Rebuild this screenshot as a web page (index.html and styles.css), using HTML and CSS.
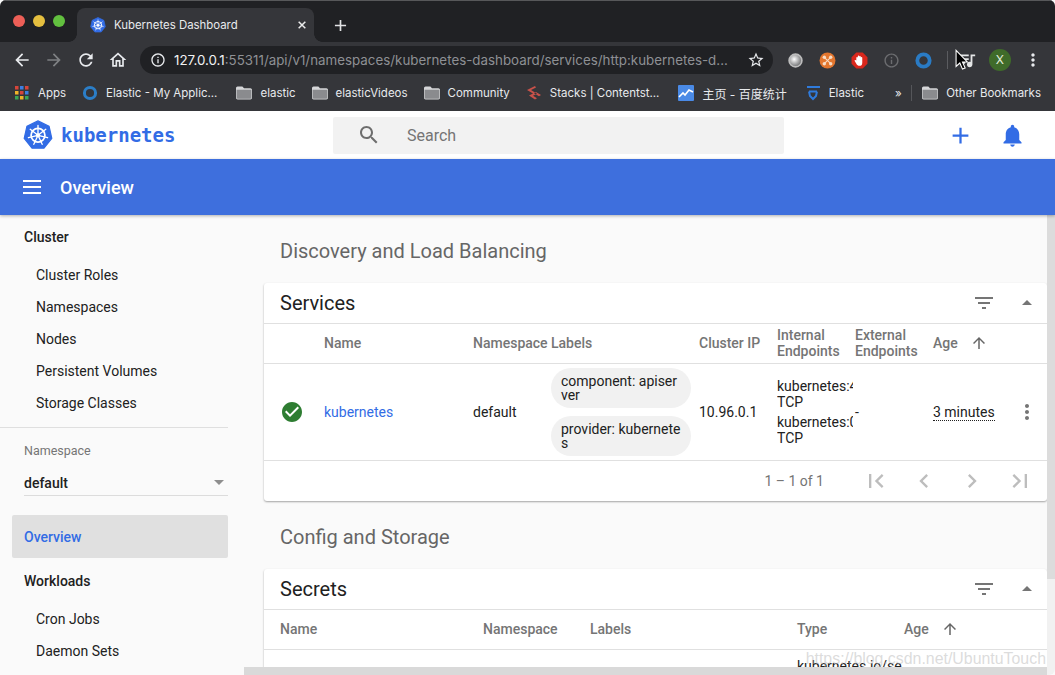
FILE: index.html
```html
<!DOCTYPE html>
<html lang="en">
<head>
<meta charset="utf-8">
<title>Kubernetes Dashboard</title>
<link rel="stylesheet" href="styles.css">
</head>
<body>
<svg class="defs" width="0" height="0" aria-hidden="true">
  <symbol id="kube" viewBox="0 0 100 100">
    <path d="M50 3 87 21 96 61 70 94H30L4 61 13 21Z" fill="#326ce5" stroke="#326ce5" stroke-width="4" stroke-linejoin="round"/>
    <g fill="none" stroke="#fff">
      <circle cx="50" cy="51" r="23" stroke-width="6"/>
      <path stroke-width="4.5" stroke-linecap="round" d="M50 51V18M50 51 76 31M50 51 82 59M50 51 64 81M50 51 36 81M50 51 18 59M50 51 24 31"/>
    </g>
    <circle cx="50" cy="51" r="7" fill="#fff"/>
  </symbol>
  <symbol id="folder" viewBox="2 3 20 18">
    <path fill="#8a8b8e" d="M3 7h18v12H3z"/>
    <path fill="#d5d6d8" d="M20 6h-8l-2-2H4c-1.100 0-2 .9-2 2v12c0 1.100.9 2 2 2h16c1.100 0 2-.9 2-2V8c0-1.100-.9-2-2-2zm1 12c0 .6-.4 1-1 1H4c-.6 0-1-.4-1-1V8h18v10z"/>
  </symbol>
  <symbol id="filter" viewBox="0 0 24 24"><path d="M10 18h4v-2h-4v2zM3 6v2h18V6H3zm3 7h12v-2H6v2z"/></symbol>
  <symbol id="dropup" viewBox="0 0 24 24"><path d="M7 14l5-5 5 5z"/></symbol>
  <symbol id="sort" viewBox="0 0 24 24"><path d="M4 12l1.410 1.410L11 7.830V20h2V7.830l5.580 5.590L20 12l-8-8-8 8z"/></symbol>
  <symbol id="vert" viewBox="0 0 24 24"><path d="M12 8c1.100 0 2-.9 2-2s-.9-2-2-2-2 .9-2 2 .9 2 2 2zm0 2c-1.100 0-2 .9-2 2s.9 2 2 2 2-.9 2-2-.9-2-2-2zm0 6c-1.100 0-2 .9-2 2s.9 2 2 2 2-.9 2-2-.9-2-2-2z"/></symbol>
</svg>

<div class="window">
  <div class="tabstrip">
    <div class="lights"><span class="light red"></span><span class="light yellow"></span><span class="light green"></span></div>
    <div class="tab">
      <svg class="tab-icon"><use href="#kube"/></svg>
      <span class="tab-title">Kubernetes Dashboard</span>
      <svg class="tab-close" viewBox="0 0 12 12"><path d="M2 2 10 10M10 2 2 10"/></svg>
    </div>
    <svg class="tab-new" viewBox="0 0 14 14"><path d="M7 1V13M1 7H13"/></svg>
  </div>

  <div class="toolbar">
    <span class="tool"><svg viewBox="0 0 24 24"><path d="M20 11H7.830l5.590-5.590L12 4l-8 8 8 8 1.410-1.410L7.830 13H20v-2z"/></svg></span>
    <span class="tool dim"><svg viewBox="0 0 24 24"><path d="M12 4l-1.410 1.410L16.170 11H4v2h12.170l-5.580 5.590L12 20l8-8z"/></svg></span>
    <span class="tool"><svg viewBox="0 0 24 24"><path d="M17.650 6.350C16.200 4.900 14.210 4 12 4c-4.420 0-7.990 3.580-7.990 8s3.570 8 7.990 8c3.730 0 6.840-2.550 7.730-6h-2.080c-.82 2.330-3.040 4-5.650 4-3.310 0-6-2.690-6-6s2.690-6 6-6c1.660 0 3.140.69 4.220 1.780L13 11h7V4l-2.350 2.350z"/></svg></span>
    <span class="tool"><svg viewBox="0 0 24 24"><path d="M12 5.690l5 4.500V18h-2v-6H9v6H7v-7.810l5-4.500M12 3L2 12h3v8h6v-6h2v6h6v-8h3L12 3z"/></svg></span>
    <div class="omnibox">
      <svg class="omni-info" viewBox="0 0 24 24"><path d="M11 7h2v2h-2zm0 4h2v6h-2zm1-9C6.480 2 2 6.480 2 12s4.480 10 10 10 10-4.480 10-10S17.520 2 12 2zm0 18c-4.410 0-8-3.590-8-8s3.590-8 8-8 8 3.590 8 8-3.590 8-8 8z"/></svg>
      <span class="url"><b>127.0.0.1</b>:55311/api/v1/namespaces/kubernetes-dashboard/services/http:kubernetes-d...</span>
      <svg class="omni-star" viewBox="0 0 24 24"><path d="M22 9.240l-7.190-.62L12 2 9.190 8.630 2 9.240l5.460 4.730L5.820 21 12 17.270 18.180 21l-1.630-7.030L22 9.240zM12 15.400l-3.760 2.270 1-4.280-3.320-2.880 4.380-.38L12 6.100l1.710 4.040 4.380.38-3.320 2.880 1 4.280L12 15.400z"/></svg>
    </div>
    <div class="exts">
      <span class="ext"><svg viewBox="0 0 16 16"><defs><radialGradient id="ball" cx=".4" cy=".4" r=".6"><stop offset="0" stop-color="#fff"/><stop offset="1" stop-color="#6d6e70"/></radialGradient></defs><circle cx="8" cy="8" r="6" fill="url(#ball)" stroke="#bdbdbd" stroke-width="1.600"/></svg></span>
      <span class="ext"><svg viewBox="0 0 16 16"><circle cx="8" cy="8" r="7.500" fill="#e3762e"/><g fill="#f8dcc4"><circle cx="5" cy="5" r="1.600"/><circle cx="11" cy="5" r="1.600"/><circle cx="5" cy="11" r="1.600"/><circle cx="11" cy="11" r="1.600"/></g><path d="M5 5 11 11M11 5 5 11" stroke="#f8dcc4"/></svg></span>
      <span class="ext"><svg viewBox="0 0 16 16"><path d="M5 .5h6L15.500 5v6L11 15.500H5L.5 11V5Z" fill="#d9271c"/><path d="M5 8V5.500a.7.700 0 0 1 1.400 0V4a.7.700 0 0 1 1.400 0v.5a.7.700 0 0 1 1.400 0v1a.7.700 0 0 1 1.400 0V10c0 2-1 3-2.600 3-1.500 0-2.200-.7-3-2L3.500 8.500c-.4-.7.5-1.300 1-.7Z" fill="#fff"/></svg></span>
      <span class="ext"><svg viewBox="0 0 24 24"><path fill="#6c6d70" d="M11 7h2v2h-2zm0 4h2v6h-2zm1-9C6.480 2 2 6.480 2 12s4.480 10 10 10 10-4.480 10-10S17.520 2 12 2zm0 18c-4.410 0-8-3.590-8-8s3.590-8 8-8 8 3.590 8 8-3.590 8-8 8z"/></svg></span>
      <span class="ext"><svg viewBox="0 0 16 16"><circle cx="8" cy="8" r="5.800" fill="none" stroke="#2a7bc4" stroke-width="3.600"/></svg></span>
      <span class="ext-sep"></span>
      <span class="ext queue"><svg viewBox="0 0 24 24"><path fill="#e4e5e6" d="M15 6H3v2h12V6zm0 4H3v2h12v-2zM3 16h8v-2H3v2zM17 6v8.180c-.310-.110-.650-.180-1-.180-1.660 0-3 1.340-3 3s1.340 3 3 3 3-1.340 3-3V8h3V6h-5z"/></svg>
        <svg class="cursor" viewBox="0 0 14 20"><path d="M1 1V16L4.500 12.800 7 18.500 9.500 17.400 7 11.800H11.500Z" fill="#000" stroke="#fff" stroke-width="1"/></svg>
      </span>
      <span class="avatar">X</span>
      <span class="ext kebab"><svg viewBox="0 0 24 24"><use href="#vert"/></svg></span>
    </div>
  </div>

  <div class="bookmarks">
    <span class="bm"><svg class="bm-icon" viewBox="-1 -1 16 16"><g><rect x="0" y="0" width="3.500" height="3.500" fill="#d6453a"/><rect x="5" y="0" width="3.500" height="3.500" fill="#3d7fe0"/><rect x="10" y="0" width="3.500" height="3.500" fill="#d6453a"/><rect x="0" y="5" width="3.500" height="3.500" fill="#f0b429"/><rect x="5" y="5" width="3.500" height="3.500" fill="#d6453a"/><rect x="10" y="5" width="3.500" height="3.500" fill="#3d7fe0"/><rect x="0" y="10" width="3.500" height="3.500" fill="#3aa655"/><rect x="5" y="10" width="3.500" height="3.500" fill="#f0b429"/><rect x="10" y="10" width="3.500" height="3.500" fill="#3aa655"/></g></svg>Apps</span>
    <span class="bm bm-pad"><svg class="bm-icon" viewBox="0 0 16 16"><circle cx="8" cy="8" r="5.600" fill="none" stroke="#2b7ec7" stroke-width="3"/></svg>Elastic - My Applic...</span>
    <span class="bm"><svg class="bm-icon"><use href="#folder"/></svg>elastic</span>
    <span class="bm"><svg class="bm-icon"><use href="#folder"/></svg>elasticVideos</span>
    <span class="bm"><svg class="bm-icon"><use href="#folder"/></svg>Community</span>
    <span class="bm bm-pad"><svg class="bm-icon" viewBox="0 0 16 16"><path d="M9 1 1 5l6 3.500-4 2 6 4 2-1.200-4-2.600 4-2L5 5l5-2.500Z M10 7l5 3-2 1.200-5-3Z" fill="#c9524a"/></svg>Stacks | Contentst...</span>
    <span class="bm bm-pad-s"><svg class="bm-icon" viewBox="0 0 16 16"><rect width="16" height="16" rx="1" fill="#4a8ae6"/><path d="M1 12 5 8l2 2 4-5 4 2" fill="none" stroke="#fff" stroke-width="1.600"/></svg><span class="cjk">主页 - 百度统计</span></span>
    <span class="bm"><svg class="bm-icon" viewBox="0 0 16 16"><path d="M2 2H15M4 6.500H12M4 6.500 5 11 8 14 11 11 12 6.500" fill="none" stroke="#2f7bdc" stroke-width="2"/></svg>Elastic</span>
    <span class="bm-more">»</span>
    <span class="bm-sep"></span>
    <span class="bm"><svg class="bm-icon"><use href="#folder"/></svg>Other Bookmarks</span>
  </div>

  <header class="app-header">
    <div class="brand"><svg class="brand-icon"><use href="#kube"/></svg><span class="brand-name">kubernetes</span></div>
    <div class="search">
      <svg class="search-icon" viewBox="0 0 24 24"><path d="M15.500 14h-.79l-.28-.27C15.410 12.590 16 11.110 16 9.500 16 5.910 13.090 3 9.500 3S3 5.910 3 9.500 5.910 16 9.500 16c1.610 0 3.090-.59 4.230-1.570l.27.28v.79l5 4.990L20.490 19l-4.990-5zm-6 0C7.010 14 5 11.990 5 9.500S7.010 5 9.500 5 14 7.010 14 9.500 11.990 14 9.500 14z"/></svg>
      <span class="search-text">Search</span>
    </div>
    <div class="header-actions">
      <svg viewBox="0 0 24 24"><path d="M19 13h-6v6h-2v-6H5v-2h6V5h2v6h6v2z"/></svg>
      <svg viewBox="0 0 24 24"><path d="M12 22c1.100 0 2-.9 2-2h-4c0 1.100.89 2 2 2zm6-6v-5c0-3.070-1.640-5.640-4.500-6.320V4c0-.83-.67-1.500-1.500-1.500s-1.500.67-1.500 1.500v.68C7.630 5.360 6 7.920 6 11v5l-2 2v1h16v-1l-2-2z"/></svg>
    </div>
  </header>

  <div class="app-bar">
    <svg class="menu-icon" viewBox="0 0 18 14"><path d="M0 1H18M0 7H18M0 13H18"/></svg>
    <span class="app-bar-title">Overview</span>
  </div>

  <div class="main">
    <nav class="sidebar">
      <div class="nav-group">Cluster</div>
      <a class="nav-item">Cluster Roles</a>
      <a class="nav-item">Namespaces</a>
      <a class="nav-item">Nodes</a>
      <a class="nav-item">Persistent Volumes</a>
      <a class="nav-item">Storage Classes</a>
      <div class="nav-divider"></div>
      <div class="ns-label">Namespace</div>
      <div class="ns-select"><span>default</span><i class="ns-caret"></i></div>
      <a class="nav-active">Overview</a>
      <div class="nav-group nav-group-2">Workloads</div>
      <a class="nav-item">Cron Jobs</a>
      <a class="nav-item">Daemon Sets</a>
    </nav>

    <section class="content">
      <h2 class="section-title">Discovery and Load Balancing</h2>
      <div class="card">
        <div class="card-head">
          <span class="card-title">Services</span>
          <svg class="ico ico-filter"><use href="#filter"/></svg>
          <svg class="ico ico-up"><use href="#dropup"/></svg>
        </div>
        <table class="data services">
          <colgroup><col class="c60"><col class="c149"><col class="c78"><col class="c148"><col class="c78"><col class="c78"><col class="c78"><col class="c84"><col class="c30"></colgroup>
          <thead><tr>
            <th></th><th>Name</th><th>Namespace</th><th>Labels</th><th>Cluster IP</th><th>Internal<br>Endpoints</th><th>External<br>Endpoints</th>
            <th><span class="age-head">Age<svg class="ico-sort"><use href="#sort"/></svg></span></th><th></th>
          </tr></thead>
          <tbody><tr>
            <td class="status-cell"><svg class="status" viewBox="0 0 24 24"><path d="M12 2C6.480 2 2 6.480 2 12s4.480 10 10 10 10-4.480 10-10S17.520 2 12 2zm-2 15l-5-5 1.410-1.410L10 14.170l7.590-7.590L19 8l-9 9z"/></svg></td>
            <td><a class="link">kubernetes</a></td>
            <td>default</td>
            <td><div class="chip">component: apiserver</div><div class="chip">provider: kubernetes</div></td>
            <td>10.96.0.1</td>
            <td class="endpoints"><div class="ep">kubernetes:443<br>TCP</div><div class="ep">kubernetes:0<br>TCP</div></td>
            <td>-</td>
            <td><span class="age">3 minutes</span></td>
            <td class="more-cell"><svg class="more"><use href="#vert"/></svg></td>
          </tr></tbody>
        </table>
        <div class="pager">
          <span class="pager-range">1 – 1 of 1</span>
          <span class="pager-btn"><svg viewBox="0 0 24 24"><path d="M18.410 16.590L13.820 12l4.590-4.590L17 6l-6 6 6 6zM6 6h2v12H6z"/></svg></span>
          <span class="pager-btn"><svg viewBox="0 0 24 24"><path d="M15.410 7.410L14 6l-6 6 6 6 1.410-1.410L10.830 12z"/></svg></span>
          <span class="pager-btn"><svg viewBox="0 0 24 24"><path d="M10 6L8.590 7.410 13.170 12l-4.580 4.590L10 18l6-6z"/></svg></span>
          <span class="pager-btn"><svg viewBox="0 0 24 24"><path d="M5.590 7.410L10.180 12l-4.590 4.590L7 18l6-6-6-6zM16 6h2v12h-2z"/></svg></span>
        </div>
      </div>

      <h2 class="section-title section-title-2">Config and Storage</h2>
      <div class="card">
        <div class="card-head">
          <span class="card-title">Secrets</span>
          <svg class="ico ico-filter"><use href="#filter"/></svg>
          <svg class="ico ico-up"><use href="#dropup"/></svg>
        </div>
        <table class="data secrets">
          <colgroup><col class="c219"><col class="c107"><col class="c207"><col class="c107"><col></colgroup>
          <thead><tr>
            <th class="first">Name</th><th>Namespace</th><th>Labels</th><th>Type</th>
            <th><span class="age-head">Age<svg class="ico-sort"><use href="#sort"/></svg></span></th>
          </tr></thead>
          <tbody><tr>
            <td class="first"></td><td></td><td></td><td class="secret-type">kubernetes.io/se</td><td></td>
          </tr></tbody>
        </table>
      </div>
    </section>

    <div class="scroll-v"></div>
    <div class="scroll-h"></div>
    <div class="watermark">https://blog.csdn.net/UbuntuTouch</div>
  </div>
</div>
</body>
</html>
```
FILE: styles.css
```css
* { box-sizing: border-box; }
html, body { margin: 0; height: 100%; overflow: hidden; }
body { font-family: Roboto, "Noto Sans", sans-serif; background: #fafafa; color: #212121; }
.defs { position: absolute; }

.window { width: 1055px; height: 675px; display: flex; flex-direction: column; overflow: hidden; border-radius: 6px; background: #fafafa; }

/* Browser frame */
.tabstrip { height: 42px; flex: none; display: flex; align-items: flex-end; background: #202124; border-top: 1px solid #57585a; }
.lights { width: 77px; height: 41px; display: flex; align-items: center; gap: 8px; padding: 0 0 1px 13px; }
.light { width: 12px; height: 12px; border-radius: 50%; }
.red { background: #ed5f57; }
.yellow { background: #e5bf3f; }
.green { background: #62c03f; }
.tab { position: relative; width: 237px; height: 34px; display: flex; align-items: center; background: #35363a; border-radius: 8px 8px 0 0; padding: 0 7px 1px 13px; color: #e8eaed; font: 11.4px Inter, Roboto, sans-serif; }
.tab::before, .tab::after { content: ""; position: absolute; bottom: 0; width: 8px; height: 8px; }
.tab::before { left: -8px; background: radial-gradient(circle at 0 0, transparent 7.5px, #35363a 8px); }
.tab::after { right: -8px; background: radial-gradient(circle at 100% 0, transparent 7.5px, #35363a 8px); }
.tab-icon { width: 16px; height: 16px; flex: none; }
.tab-title { margin-left: 8px; flex: 1; white-space: nowrap; }
.tab-close { width: 10px; height: 10px; fill: none; stroke: #eceded; stroke-width: 1.8; }
.tab-new { width: 13px; height: 13px; margin: 0 0 10px 20px; fill: none; stroke: #e2e3e5; stroke-width: 1.8; }

.toolbar { height: 36px; flex: none; display: flex; align-items: center; padding-left: 6px; background: #35363a; }
.tool { width: 32px; height: 32px; display: flex; align-items: center; justify-content: center; fill: #e8eaed; }
.tool svg { width: 20px; height: 20px; }
.tool.dim { fill: #7e8083; }
.omnibox { width: 633px; height: 28px; margin-left: 6px; display: flex; align-items: center; padding: 0 8px 0 10px; background: #202124; border-radius: 14px; font: 13.35px Inter, Roboto, sans-serif; color: #8e9094; }
.omni-info { width: 16px; height: 16px; flex: none; fill: #e8eaed; }
.url { margin-left: 8px; flex: 1; white-space: nowrap; overflow: hidden; }
.url b { font-weight: 400; color: #f1f2f3; }
.omni-star { width: 18px; height: 18px; fill: #e8eaed; flex: none; }
.exts { display: flex; align-items: center; padding-left: 6px; }
.ext { width: 32.2px; height: 28px; display: flex; align-items: center; justify-content: center; }
.ext svg { width: 17px; height: 17px; }
.ext-sep { width: 1px; height: 18px; margin: 0 2px 0 7px; background: #5b5c60; }
.queue { position: relative; width: 32px; }
.queue svg { width: 22px; height: 22px; }
.queue .cursor { position: absolute; left: 5px; top: 3px; width: 15px; height: 22px; }
.avatar { width: 22px; height: 22px; margin-left: 7px; border-radius: 50%; background: #3f6b2a; color: #e2ebdc; font: 12px/22px Inter, Roboto, sans-serif; text-align: center; }
.kebab { margin-left: 10px; width: 24px; fill: #e8eaed; }
.kebab svg { width: 20px; height: 20px; }

.bookmarks { height: 33px; flex: none; display: flex; align-items: center; padding: 0 14px 3px 14px; gap: 16px; background: #35363a; color: #e8eaed; font: 11.5px Inter, Roboto, sans-serif; white-space: nowrap; }
.bm { display: flex; align-items: center; gap: 8px; }
.bm-pad { margin-right: 3px; }
.bm-pad-s { margin-right: 2px; }
.bm-icon { width: 16px; height: 16px; flex: none; }
.cjk { font-family: Inter, "Noto Sans CJK SC", sans-serif; font-size: 12px; }
.bm-more { margin-left: 15px; }
.bm-sep { width: 1px; height: 16px; margin: 0 -5px 0 -7px; background: #55565a; }

/* App header */
.app-header { height: 48px; flex: none; display: flex; align-items: center; background: #fff; }
.brand { width: 333px; display: flex; align-items: center; padding-left: 23px; }
.brand-icon { width: 30px; height: 30px; flex: none; }
.brand-name { margin-left: 8px; font: 700 19px "DejaVu Sans Mono", monospace; color: #326ce5; }
.search { width: 451px; height: 37px; display: flex; align-items: center; padding-left: 24px; background: #f2f2f2; border-radius: 2px; }
.search-icon { width: 24px; height: 24px; flex: none; fill: #6e6e6e; }
.search-text { margin-left: 26px; font-size: 16px; color: #757575; }
.header-actions { display: flex; margin-left: 163px; gap: 25px; fill: #326ce5; }
.header-actions svg { width: 27px; height: 27px; }

.app-bar { height: 56px; flex: none; display: flex; align-items: center; padding: 0 0 0 23px; background: #3e6fdd; color: #fff; box-shadow: 0 1px 3px rgba(0, 0, 0, .3); position: relative; z-index: 1; }
.menu-icon { width: 18px; height: 14px; fill: none; stroke: #fff; stroke-width: 2; }
.app-bar-title { margin-left: 19px; font-size: 18px; font-weight: 500; }

/* Layout */
.main { flex: 1; min-height: 0; display: flex; position: relative; overflow: hidden; background: #fafafa; }

.sidebar { width: 244px; flex: none; padding: 6px 16px 0 0; font-size: 14px; }
.nav-group { height: 32px; line-height: 32px; padding-left: 24px; margin-bottom: 6px; font-weight: 500; }
.nav-group-2 { margin-top: 7px; }
.nav-item { display: block; height: 32px; line-height: 32px; padding-left: 36px; }
.nav-divider { height: 1px; margin-top: 8px; background: #dfdfdf; }
.ns-label { margin: 16px 0 0 24px; height: 14px; line-height: 14px; font-size: 12.5px; color: #757575; }
.ns-select { margin: 8px 0 0 24px; height: 30px; padding-top: 4px; display: flex; align-items: center; justify-content: space-between; border-bottom: 1px solid #dcdcdc; font-weight: 500; }
.ns-caret { width: 0; height: 0; margin-right: 4px; border: 5px solid transparent; border-top-color: #8e8e8e; border-bottom: 0; }
.nav-active { display: block; height: 43px; line-height: 44px; margin: 19px 0 0 12px; padding-left: 12px; background: #e0e0e0; border-radius: 2px; color: #326ce5; font-weight: 500; }

.content { flex: 1; min-width: 0; padding: 16px 8px 0 20px; font-size: 14px; }
.section-title { margin: 0 0 12px; height: 40px; line-height: 40px; padding-left: 16px; font-size: 20px; font-weight: 400; color: #666; }
.section-title-2 { margin-top: 16px; }

.card { background: #fff; border-radius: 3px; box-shadow: 0 1px 2px rgba(0, 0, 0, .35); }
.card-head { height: 41px; display: flex; align-items: center; padding: 0 8px 0 16px; border-bottom: 1px solid #e0e0e0; }
.card-title { flex: 1; font-size: 20px; color: #212121; }
.ico { width: 24px; height: 24px; fill: #757575; }
.ico-filter { margin-right: 19px; }

.data { width: 100%; table-layout: fixed; border-collapse: separate; border-spacing: 0; }
.c60 { width: 60px; } .c149 { width: 149px; } .c78 { width: 78px; } .c148 { width: 148px; } .c84 { width: 84px; } .c30 { width: 30px; }
.c219 { width: 219px; } .c107 { width: 107px; } .c207 { width: 207px; }
.data th { height: 40px; padding: 0 8px 2px 0; border-bottom: 1px solid #e0e0e0; text-align: left; font-size: 14px; font-weight: 500; line-height: 16px; color: #757575; white-space: nowrap; }
.data td { height: 97px; padding: 0 8px 0 0; border-bottom: 1px solid #e0e0e0; font-size: 14px; }
.data .first { padding-left: 16px; }
.age-head { display: inline-flex; align-items: center; }
.ico-sort { width: 18px; height: 18px; margin-left: 12px; fill: #666; }
.status-cell { padding-left: 16px !important; }
.status { display: block; width: 24px; height: 24px; fill: #2e7d32; }
.link { color: #326ce5; }
.chip { padding: 6px 10px; line-height: 14px; background: #f1f1f1; border-radius: 20px; word-break: break-all; }
.chip + .chip { margin-top: 8px; }
.endpoints { padding-right: 2px !important; }
.ep { line-height: 16px; overflow: hidden; white-space: nowrap; }
.ep + .ep { margin-top: 4px; }
.age { border-bottom: 1px dotted #212121; line-height: 15px; display: inline-block; }
.more-cell { padding: 0 !important; }
.more { display: block; width: 24px; height: 24px; margin-left: -2px; fill: #757575; }

.pager { height: 40px; display: flex; align-items: center; justify-content: flex-end; padding-right: 3px; }
.pager-range { margin-right: 28px; color: #757575; }
.pager-btn { width: 48px; display: flex; justify-content: center; fill: #bdbdbd; }
.pager-btn svg { width: 28px; height: 28px; }

.secret-type { vertical-align: top; padding-top: 8px !important; line-height: 16px; white-space: nowrap; }

/* Overlays */
.scroll-v { position: absolute; right: 0; top: 0; width: 8px; height: 100%; background: #f1f1f1; }
.scroll-v::before { content: ""; display: block; height: 364px; background: #dcdcdc; }
.scroll-h { position: absolute; left: 244px; right: 8px; bottom: 0; height: 8px; background: #d9d9d9; }
.watermark { position: absolute; right: 9px; bottom: 7px; font: 15.9px "Liberation Sans", sans-serif; color: rgba(190, 190, 190, .55); white-space: nowrap; }
```
